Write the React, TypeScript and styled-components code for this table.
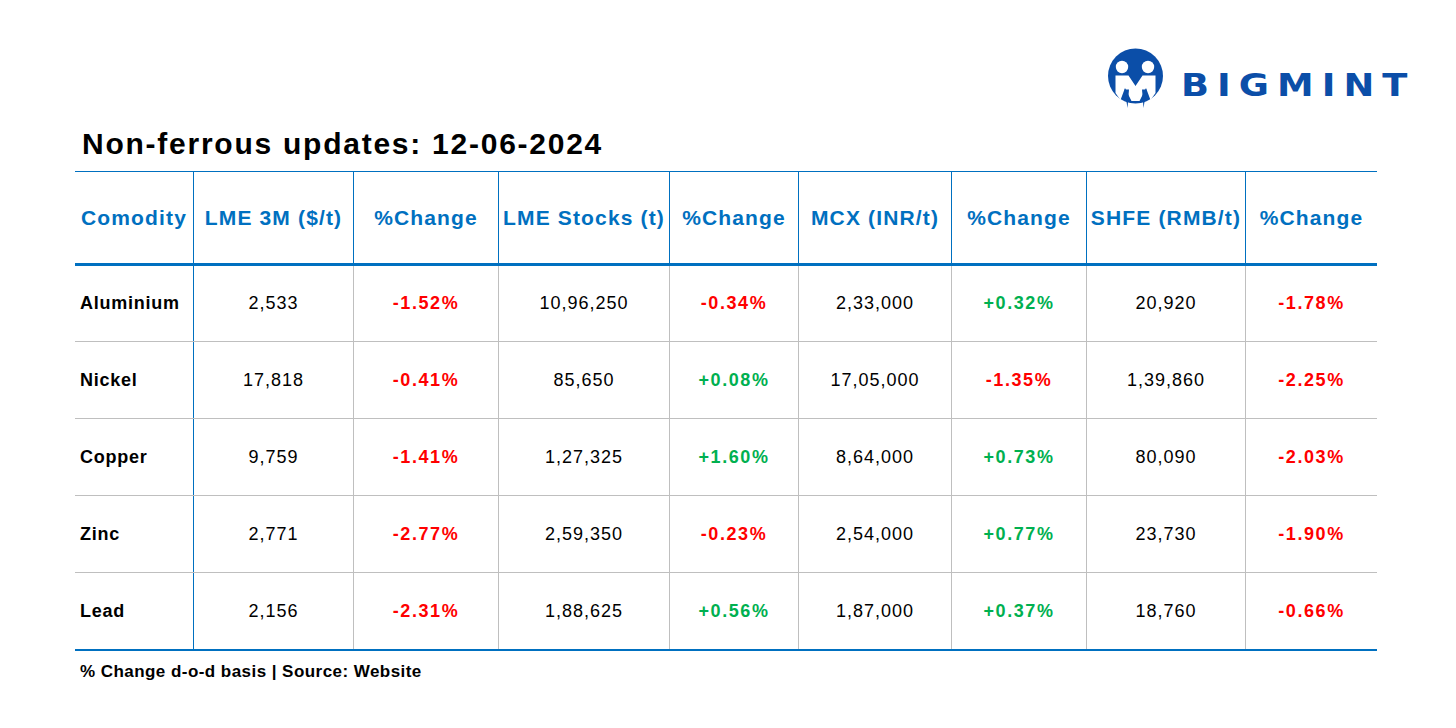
import React from "react";
import styled, { createGlobalStyle } from "styled-components";

const GlobalStyle = createGlobalStyle`
  html, body {
    margin: 0;
    padding: 0;
    background: #ffffff;
  }
  body {
    font-family: "Liberation Sans", Arial, sans-serif;
    color: #000000;
  }
`;

const BLUE = "#0070C0";
const GREY = "#BFBFBF";

const Page = styled.div`
  width: 1456px;
  min-height: 728px;
  display: flex;
  flex-direction: column;
`;

const TopBar = styled.header`
  display: flex;
  justify-content: flex-end;
  padding: 46px 38px 0 0;
`;

const Title = styled.h1`
  margin: 18px 0 0 82px;
  font-family: "Liberation Sans", Arial, sans-serif;
  font-weight: 700;
  font-size: 30px;
  line-height: 36px;
  letter-spacing: 1.75px;
  color: #000000;
`;

const Content = styled.div`
  margin: 9px 0 0 75px;
  width: 1302px;
  display: flex;
  flex-direction: column;
`;

const COLS = "119px 160px 145px 171px 129px 153px 135px 159px 131px";

const Table = styled.div`
  display: flex;
  flex-direction: column;
  border-top: 1px solid ${BLUE};
`;

const HeaderRow = styled.div`
  display: grid;
  grid-template-columns: ${COLS};
  height: 94px;
  box-sizing: border-box;
  border-bottom: 3px solid ${BLUE};
`;

const HeadCell = styled.div<{ $left?: boolean; $last?: boolean }>`
  display: flex;
  align-items: center;
  justify-content: ${(p) => (p.$left ? "flex-start" : "center")};
  padding-left: ${(p) => (p.$left ? "6px" : "0")};
  border-right: ${(p) => (p.$last ? "none" : `1px solid ${BLUE}`)};
  font-weight: 700;
  font-size: 21px;
  letter-spacing: 1.15px;
  color: ${BLUE};
  white-space: nowrap;
`;

const BodyRow = styled.div<{ $first?: boolean; $last?: boolean }>`
  display: grid;
  grid-template-columns: ${COLS};
  box-sizing: border-box;
  height: ${(p) => (p.$first ? "76px" : p.$last ? "78px" : "77px")};
  border-bottom: ${(p) => (p.$last ? `2px solid ${BLUE}` : `1px solid ${GREY}`)};
`;

const Cell = styled.div<{ $kind: "name" | "num" | "up" | "down"; $last?: boolean }>`
  display: flex;
  align-items: center;
  justify-content: ${(p) => (p.$kind === "name" ? "flex-start" : "center")};
  padding-left: ${(p) => (p.$kind === "name" ? "5px" : "0")};
  border-right: ${(p) =>
    p.$last ? "none" : p.$kind === "name" ? `1px solid ${BLUE}` : `1px solid ${GREY}`};
  font-size: 18px;
  font-weight: ${(p) => (p.$kind === "num" ? 400 : 700)};
  letter-spacing: ${(p) => (p.$kind === "name" ? "0.75px" : p.$kind === "num" ? "1px" : "1.6px")};
  color: ${(p) => (p.$kind === "up" ? "#00B050" : p.$kind === "down" ? "#FF0000" : "#000000")};
  white-space: nowrap;
`;

const Note = styled.p`
  margin: 11px 0 0 5px;
  font-weight: 700;
  font-size: 17px;
  line-height: 20px;
  letter-spacing: 0.45px;
  color: #000000;
`;

const LogoSvg = styled.svg`
  display: block;
  overflow: visible;
`;

const LOGO_BLUE = "#0B4EA8";

const Logo: React.FC = () => (
  <LogoSvg width="312" height="62" viewBox="0 0 312 62" aria-label="BIGMINT">
    <circle cx="29.5" cy="30" r="27.5" fill={LOGO_BLUE} />
    <circle cx="16" cy="21" r="6.2" fill="#ffffff" />
    <circle cx="42" cy="21" r="6.2" fill="#ffffff" />
    <path
      d="M9.5 29.5 L22.5 29.5 L29.5 40 L36.5 29.5 L49.5 29.5 L49.5 47 L44.5 54 L40 42 L33.5 55 L25.5 55 L19 42 L14.5 54 L9.5 47 Z"
      fill="#ffffff"
    />
    <path d="M18.5 43.5 L23 43.5 L21.5 62 Z" fill={LOGO_BLUE} />
    <path d="M36 43.5 L40.5 43.5 L37.5 62 Z" fill={LOGO_BLUE} />
    <text
      transform="translate(75 49.5) scale(1.15 1)"
      fontFamily="DejaVu Sans, sans-serif"
      fontWeight="700"
      fontSize="32"
      letterSpacing="7"
      fill={LOGO_BLUE}
    >
      BIGMINT
    </text>
  </LogoSvg>
);

type Change = string;
interface Row {
  name: string;
  values: [string, Change, string, Change, string, Change, string, Change];
}

const headers = [
  "Comodity",
  "LME 3M ($/t)",
  "%Change",
  "LME Stocks (t)",
  "%Change",
  "MCX (INR/t)",
  "%Change",
  "SHFE (RMB/t)",
  "%Change",
];

const rows: Row[] = [
  { name: "Aluminium", values: ["2,533", "-1.52%", "10,96,250", "-0.34%", "2,33,000", "+0.32%", "20,920", "-1.78%"] },
  { name: "Nickel", values: ["17,818", "-0.41%", "85,650", "+0.08%", "17,05,000", "-1.35%", "1,39,860", "-2.25%"] },
  { name: "Copper", values: ["9,759", "-1.41%", "1,27,325", "+1.60%", "8,64,000", "+0.73%", "80,090", "-2.03%"] },
  { name: "Zinc", values: ["2,771", "-2.77%", "2,59,350", "-0.23%", "2,54,000", "+0.77%", "23,730", "-1.90%"] },
  { name: "Lead", values: ["2,156", "-2.31%", "1,88,625", "+0.56%", "1,87,000", "+0.37%", "18,760", "-0.66%"] },
];

const kindOf = (v: string, i: number): "num" | "up" | "down" =>
  i % 2 === 0 ? "num" : v.startsWith("+") ? "up" : "down";

export default function App() {
  return (
    <>
      <GlobalStyle />
      <Page>
        <TopBar>
          <Logo />
        </TopBar>
        <Title>Non-ferrous updates: 12-06-2024</Title>
        <Content>
          <Table>
            <HeaderRow>
              {headers.map((h, i) => (
                <HeadCell key={i} $left={i === 0} $last={i === headers.length - 1}>
                  {h}
                </HeadCell>
              ))}
            </HeaderRow>
            {rows.map((r, ri) => (
              <BodyRow key={r.name} $first={ri === 0} $last={ri === rows.length - 1}>
                <Cell $kind="name">{r.name}</Cell>
                {r.values.map((v, i) => (
                  <Cell key={i} $kind={kindOf(v, i)} $last={i === r.values.length - 1}>
                    {v}
                  </Cell>
                ))}
              </BodyRow>
            ))}
          </Table>
          <Note>% Change d-o-d basis | Source: Website</Note>
        </Content>
      </Page>
    </>
  );
}
